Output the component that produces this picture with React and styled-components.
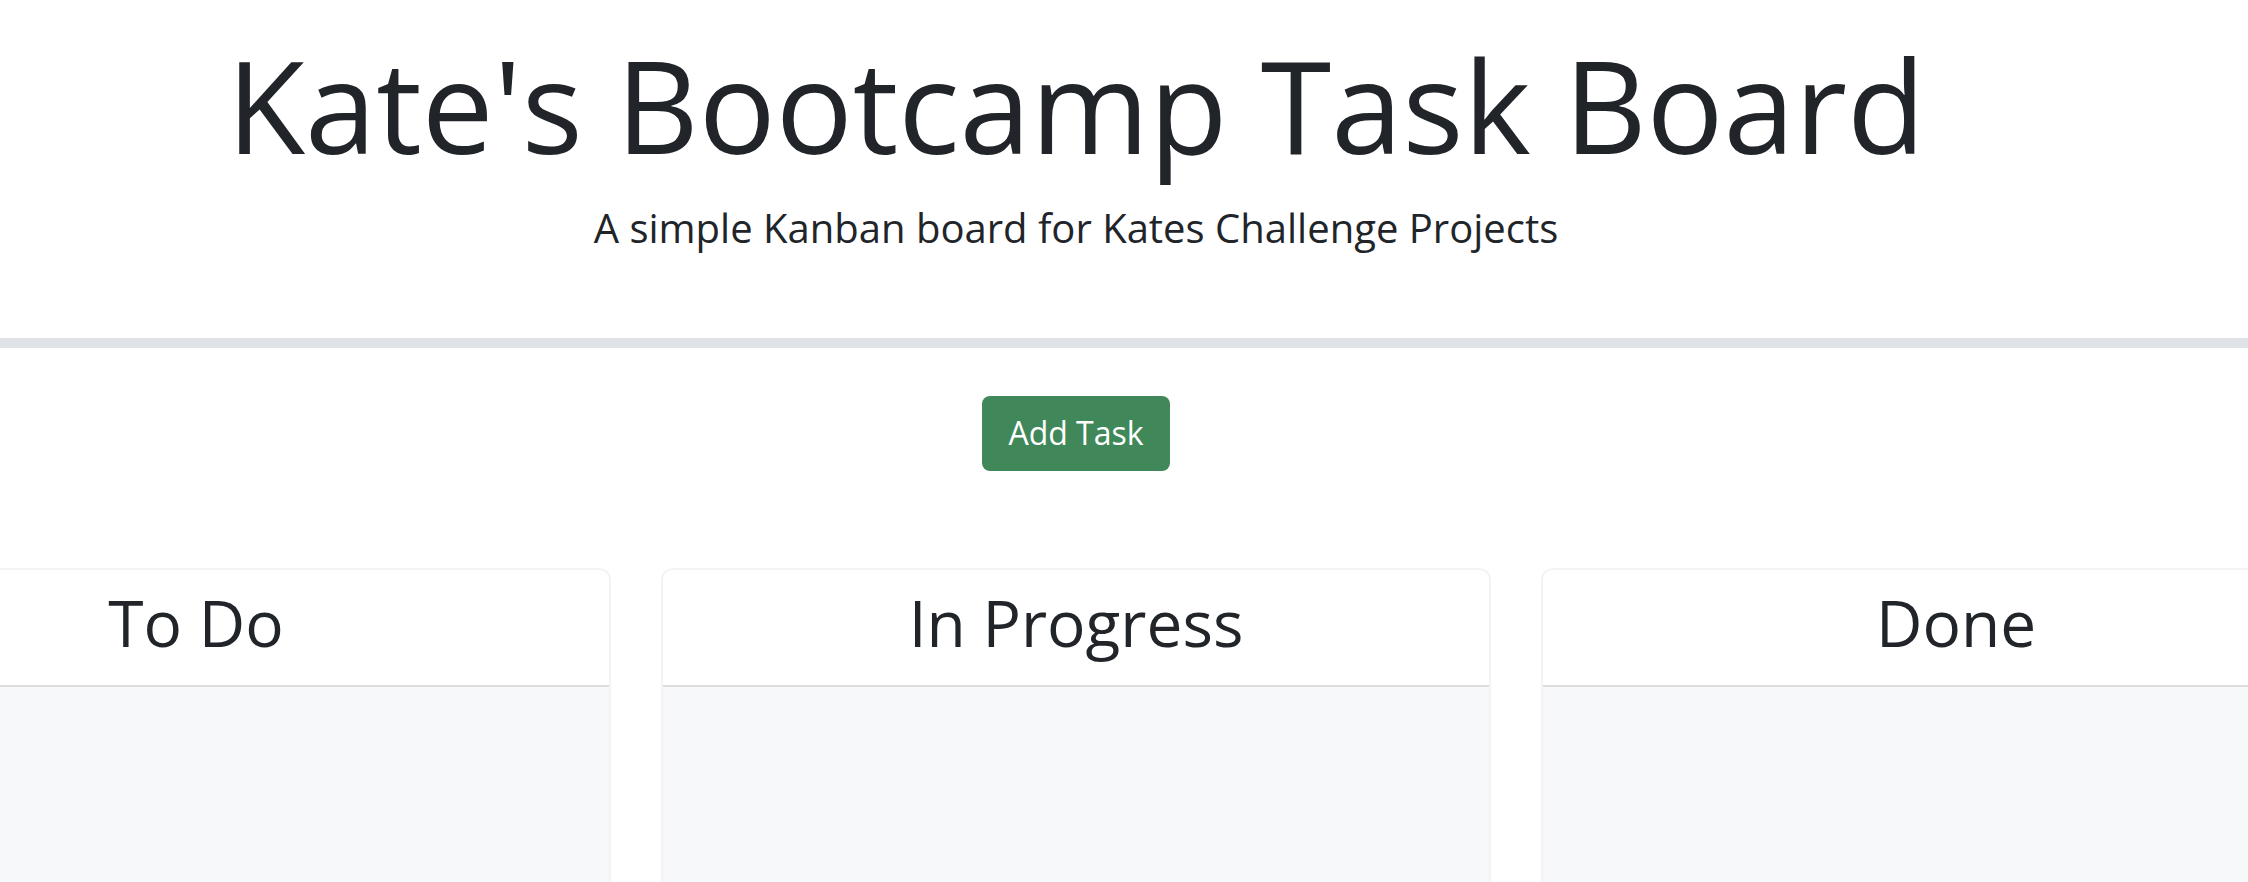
import React from 'react';
import styled, { createGlobalStyle } from 'styled-components';

const GlobalStyle = createGlobalStyle`
  html, body {
    margin: 0;
    padding: 0;
    overflow: hidden;
    background: #ffffff;
  }
  body {
    font-family: "Open Sans", "Liberation Sans", sans-serif;
    color: #212529;
  }
`;

const Page = styled.div`
  width: 100%;
  overflow: hidden;
`;

const Hero = styled.header`
  padding: 28px 96px 80px 0;
  text-align: center;
  border-bottom: 10px solid #dfe2e6;
`;

const Title = styled.h1`
  margin: 0;
  font-size: 128px;
  font-weight: 400;
  line-height: 1.2;
  letter-spacing: 0;
`;

const Lead = styled.p`
  margin: 16px 0 0;
  font-size: 40px;
  font-weight: 400;
  line-height: 1.5;
`;

const Main = styled.main`
  padding: 48px 96px 0 0;
  display: flex;
  flex-direction: column;
  align-items: center;
`;

const AddButton = styled.button`
  font-family: inherit;
  font-size: 32px;
  line-height: 1.5;
  color: #ffffff;
  background: #408859;
  border: none;
  border-radius: 8px;
  padding: 13px 24px 14px;
  width: 188px;
  cursor: pointer;
`;

const Board = styled.div`
  margin-top: 97px;
  width: 100%;
  display: flex;
  justify-content: center;
  gap: 50px;
`;

const Column = styled.section`
  flex: 0 0 830px;
  display: flex;
  flex-direction: column;
  border: 2px solid #f3f3f4;
  border-bottom: none;
  border-radius: 12px 12px 0 0;
  overflow: hidden;
  box-sizing: border-box;
`;

const ColumnHeader = styled.div`
  background: #ffffff;
  padding: 15px 0 24px;
  border-bottom: 2px solid #dcdddf;
  text-align: center;
`;

const ColumnTitle = styled.h2`
  margin: 0;
  font-size: 64px;
  font-weight: 400;
  line-height: 1.2;
`;

const ColumnBody = styled.div`
  background: #f7f8fa;
  min-height: 260px;
`;

const columns = ['To Do', 'In Progress', 'Done'];

export default function App() {
  return (
    <Page>
      <GlobalStyle />
      <Hero>
        <Title>Kate's Bootcamp Task Board</Title>
        <Lead>A simple Kanban board for Kates Challenge Projects</Lead>
      </Hero>
      <Main>
        <AddButton type="button">Add Task</AddButton>
        <Board>
          {columns.map((name) => (
            <Column key={name}>
              <ColumnHeader>
                <ColumnTitle>{name}</ColumnTitle>
              </ColumnHeader>
              <ColumnBody />
            </Column>
          ))}
        </Board>
      </Main>
    </Page>
  );
}
